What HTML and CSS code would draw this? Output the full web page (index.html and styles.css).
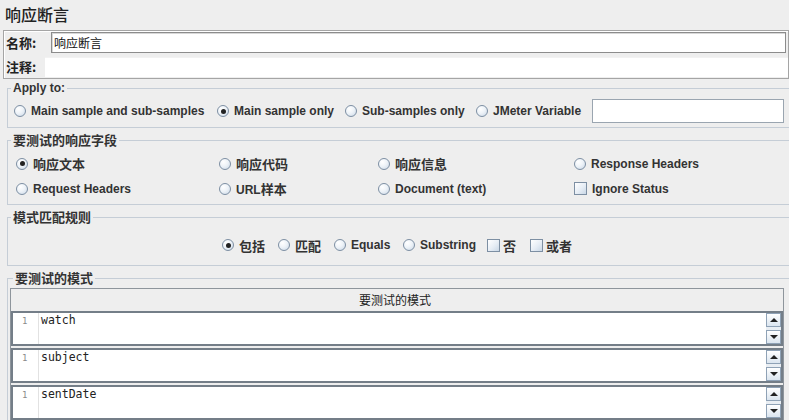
FILE: index.html
```html
<!DOCTYPE html>
<html>
<head>
<meta charset="utf-8">
<link rel="stylesheet" href="styles.css">
</head>
<body>
<div class="title">响应断言</div>

<div class="name-panel">
  <div class="name-row">
    <span class="lbl cjk">名称:</span>
    <div class="name-input">响应断言</div>
  </div>
  <div class="comment-row">
    <span class="lbl lbl-c cjk">注释:</span>
    <div class="comment-input"></div>
  </div>
</div>

<fieldset class="group apply">
  <legend>Apply to:</legend>
  <div class="apply-grid">
    <label class="opt"><span class="radio"></span>Main sample and sub-samples</label>
    <label class="opt"><span class="radio on"></span>Main sample only</label>
    <label class="opt"><span class="radio"></span>Sub-samples only</label>
    <label class="opt"><span class="radio"></span>JMeter Variable</label>
    <div class="var-input"></div>
  </div>
</fieldset>

<fieldset class="group fields">
  <legend class="cjk">要测试的响应字段</legend>
  <div class="fields-grid">
    <label class="opt"><span class="radio on"></span><span class="cjk">响应文本</span></label>
    <label class="opt"><span class="radio"></span><span class="cjk">响应代码</span></label>
    <label class="opt"><span class="radio"></span><span class="cjk">响应信息</span></label>
    <label class="opt"><span class="radio"></span>Response Headers</label>
    <label class="opt"><span class="radio"></span>Request Headers</label>
    <label class="opt"><span class="radio"></span><span>URL<span class="cjk">样本</span></span></label>
    <label class="opt"><span class="radio"></span>Document (text)</label>
    <label class="opt"><span class="check"></span>Ignore Status</label>
  </div>
</fieldset>

<fieldset class="group rules">
  <legend class="cjk">模式匹配规则</legend>
  <div class="rules-row">
    <label class="opt w-a"><span class="radio on"></span><span class="cjk">包括</span></label>
    <label class="opt w-b"><span class="radio"></span><span class="cjk">匹配</span></label>
    <label class="opt w-c"><span class="radio"></span>Equals</label>
    <label class="opt w-d"><span class="radio"></span>Substring</label>
    <label class="opt opt-c w-e"><span class="check"></span><span class="cjk">否</span></label>
    <label class="opt opt-c"><span class="check"></span><span class="cjk">或者</span></label>
  </div>
</fieldset>

<fieldset class="group patterns">
  <legend class="cjk">要测试的模式</legend>
  <div class="table">
    <div class="thead">要测试的模式</div>
    <div class="trow">
      <div class="gutter">1</div>
      <div class="code">watch</div>
      <div class="sbar"><span class="sbtn"><span class="arr up"></span></span><span class="strack"></span><span class="sbtn"><span class="arr down"></span></span></div>
    </div>
    <div class="trow">
      <div class="gutter">1</div>
      <div class="code">subject</div>
      <div class="sbar"><span class="sbtn"><span class="arr up"></span></span><span class="strack"></span><span class="sbtn"><span class="arr down"></span></span></div>
    </div>
    <div class="trow">
      <div class="gutter">1</div>
      <div class="code">sentDate</div>
      <div class="sbar"><span class="sbtn"><span class="arr up"></span></span><span class="strack"></span><span class="sbtn"><span class="arr down"></span></span></div>
    </div>
  </div>
</fieldset>
</body>
</html>
```

FILE: styles.css
```css
* { box-sizing: border-box; }
html, body { margin: 0; padding: 0; }
body {
  width: 789px;
  height: 420px;
  overflow: hidden;
  background: #eeeeee;
  color: #333333;
  font-family: "Liberation Sans", "Noto Sans CJK SC", sans-serif;
  font-size: 12px;
}
.cjk {
  font-family: "Noto Sans CJK SC", "Liberation Sans", sans-serif;
  font-size: 13px;
}

.title {
  height: 30px;
  padding: 2px 0 0 5px;
  font-family: "Noto Sans CJK SC", sans-serif;
  font-size: 16px;
  font-weight: 500;
  line-height: 24px;
  color: #222222;
}

/* name / comment panel */
.name-panel {
  margin-left: 3px;
  width: 786px;
  height: 49px;
  border: 1px solid #a5a5a5;
  box-shadow: inset 1px 1px 0 #ffffff;
  display: flex;
  flex-direction: column;
}
.name-row {
  display: flex;
  height: 25px;
  padding-top: 1px;
}
.lbl {
  width: 47px;
  padding-left: 2px;
  font-weight: bold;
  line-height: 21px;
  color: #222222;
}
.lbl-c { width: 41px; }
.name-input {
  width: 735px;
  height: 21px;
  border: 1px solid #8c8c8c;
  box-shadow: inset 1px 1px 0 #d8d8d8;
  background: #ffffff;
  padding-left: 2px;
  font-family: "Noto Sans CJK SC", sans-serif;
  font-size: 12px;
  line-height: 19px;
  color: #111111;
}
.comment-row {
  display: flex;
  height: 22px;
  padding-top: 1px;
}
.comment-row .lbl { line-height: 20px; }
.comment-input {
  flex: 1;
  height: 20px;
  background: #ffffff;
  border-top: 1px solid #f2f2f2;
}

/* titled groups */
.group {
  margin: 5px 0 0 7px;
  width: 800px;
  min-width: 0;
  padding: 0;
  border: 1px solid #c5cdd6;
}
.group legend {
  margin-left: 3px;
  padding: 0 2px;
  height: 14px;
  line-height: 14px;
  font-weight: bold;
  color: #333333;
}
.group legend.cjk { line-height: 14px; }
.apply { margin-top: 2px; }

.opt {
  display: flex;
  align-items: center;
  gap: 5px;
  font-weight: bold;
  color: #333333;
  white-space: nowrap;
}
.opt .cjk { font-weight: bold; }
.opt-c { gap: 3px; }

.radio {
  flex: none;
  width: 12px;
  height: 12px;
  border-radius: 50%;
  border: 1px solid #7d8fa3;
  background: radial-gradient(circle at 35% 30%, #ffffff 0%, #eef3f8 45%, #c9d7e6 100%);
  display: flex;
  align-items: center;
  justify-content: center;
}
.radio.on::after {
  content: "";
  width: 5px;
  height: 5px;
  border-radius: 50%;
  background: #222222;
}
.check {
  flex: none;
  width: 13px;
  height: 13px;
  border: 1px solid #7d8fa3;
  background: linear-gradient(135deg, #ffffff 0%, #e6edf5 55%, #c9d7e6 100%);
}

.apply-grid {
  display: grid;
  grid-template-columns: 203px 128px 131px 116px 192px;
  grid-template-rows: 24px;
  padding: 4px 0 4px 6px;
  align-items: center;
}
.var-input {
  height: 24px;
  background: #ffffff;
  border: 1px solid #9aa5b0;
}

.fields-grid {
  display: grid;
  grid-template-columns: 203px 159px 196px 1fr;
  grid-auto-rows: 25px;
  padding: 4px 0 3px 8px;
  align-items: center;
}

.rules-row {
  display: flex;
  align-items: center;
  height: 24px;
  margin: 9px 0 8px 0;
  padding-left: 214px;
}
.w-a { width: 56px; }
.w-b { width: 56px; }
.w-c { width: 69px; }
.w-d { width: 84px; }
.w-e { width: 43px; }

/* pattern table */
.patterns { padding: 3px 0 0 2px; }
.table {
  width: 774px;
  border: 1px solid #8e959c;
  border-bottom: none;
}
.thead {
  height: 22px;
  line-height: 22px;
  text-align: center;
  background: #eeeeee;
  font-family: "Noto Sans CJK SC", sans-serif;
  font-size: 12px;
  color: #222222;
  padding-right: 4px;
}
.trow {
  height: 35px;
  margin-bottom: 2px;
  border: 2px solid #747e88;
  background: #ffffff;
  display: flex;
}
.gutter {
  width: 26px;
  border-right: 1px solid #e2e2e2;
  padding: 2px 0 0 9px;
  font-family: "DejaVu Sans Mono", monospace;
  font-size: 9px;
  line-height: 12px;
  color: #8a8a8a;
}
.code {
  flex: 1;
  padding: 0 0 0 2px;
  font-family: "DejaVu Sans Mono", monospace;
  font-size: 11.5px;
  line-height: 14px;
  color: #222222;
}
.sbar {
  width: 15px;
  display: flex;
  flex-direction: column;
  background: #e9eef3;
}
.sbtn {
  height: 14px;
  border: 1px solid #8fa2b6;
  background: linear-gradient(#ffffff, #dbe5ef);
  display: flex;
  align-items: center;
  justify-content: center;
}
.strack { flex: 1; }
.arr {
  width: 0;
  height: 0;
  border-left: 4px solid transparent;
  border-right: 4px solid transparent;
}
.arr.up { border-bottom: 4px solid #222222; }
.arr.down { border-top: 4px solid #222222; }
```
